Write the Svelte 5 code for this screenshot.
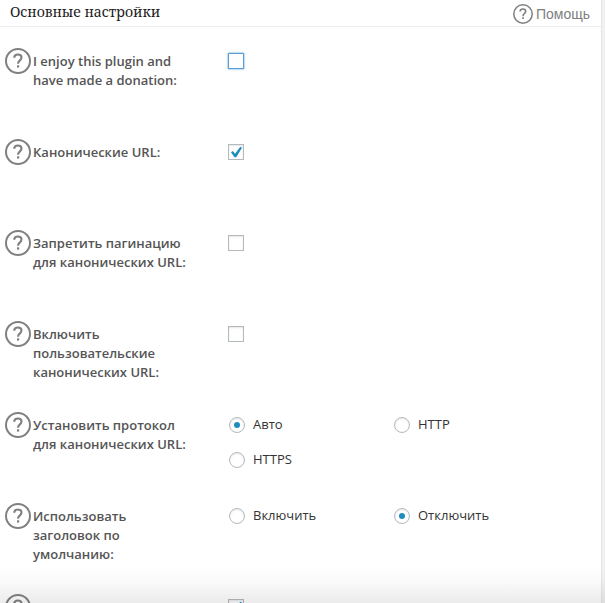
<script>
  const options = [
    { id: 'donate', label: 'I enjoy this plugin and have made a donation:', type: 'checkbox', checked: false, active: true },
    { id: 'canonical', label: 'Канонические URL:', type: 'checkbox', checked: true },
    { id: 'no-paged', label: 'Запретить пагинацию для канонических URL:', type: 'checkbox', checked: false },
    { id: 'custom-canonical', label: 'Включить пользовательские канонических URL:', type: 'checkbox', checked: false },
    { id: 'protocol', label: 'Установить протокол для канонических URL:', type: 'radio', choices: ['Авто', 'HTTP', 'HTTPS'], value: 'Авто' },
    { id: 'original-title', label: 'Использовать заголовок по умолчанию:', type: 'radio', choices: ['Включить', 'Отключить'], value: 'Отключить' },
    { id: 'more', label: '', type: 'checkbox', checked: true }
  ];

  let values = $state(Object.fromEntries(options.map((o) => [o.id, o.type === 'radio' ? o.value : o.checked])));
</script>

{#snippet helpIcon()}
  <svg viewBox="0 0 26 26" fill="none" stroke="currentColor" aria-hidden="true">
    <circle cx="13" cy="13" r="12" stroke-width="2" />
    <path d="M9.2 9.8C9.3 7.6 10.8 6.5 12.9 6.5c2.2 0 3.6 1.2 3.6 3 0 1.5-.9 2.3-1.8 3.1-1.1.9-1.6 1.6-1.6 3.2" stroke-width="2.1" />
    <path d="M12 17.3h2.2v2.3H12z" fill="currentColor" stroke="none" />
  </svg>
{/snippet}

<main class="settings">
  <section class="postbox">
    <header>
      <h3>Основные настройки</h3>
      <a class="help" href="#help">
        {@render helpIcon()}
        <span>Помощь</span>
      </a>
    </header>

    <form class="options">
      {#each options as option (option.id)}
        <div class="option">
          <button type="button" class="hint" aria-label="Помощь">{@render helpIcon()}</button>

          {#if option.type === 'checkbox'}
            <label class="title" for={option.id}>{option.label}</label>
            <div class="field">
              <input
                type="checkbox"
                id={option.id}
                class:active={option.active}
                bind:checked={values[option.id]}
              >
            </div>
          {:else}
            <span class="title" id="{option.id}-title">{option.label}</span>
            <div class="field choices" role="radiogroup" aria-labelledby="{option.id}-title">
              {#each option.choices as choice}
                <label class="choice">
                  <input type="radio" name={option.id} value={choice} bind:group={values[option.id]}>
                  <span>{choice}</span>
                </label>
              {/each}
            </div>
          {/if}
        </div>
      {/each}
    </form>
  </section>
  <div class="shade"></div>
</main>

<style>
  :global(body) {
    margin: 0;
    background: #f1f1f1;
  }

  .settings {
    position: relative;
    height: 100vh;
    overflow: hidden;
    font: 13px/19px "Open Sans", "Noto Sans", sans-serif;
    color: #333;
  }

  .postbox {
    margin-right: 3px;
    background: #fff;
    border-right: 1px solid #e5e5e5;
  }

  header {
    display: flex;
    align-items: center;
    justify-content: space-between;
    height: 26px;
    padding: 0 11px 0 10px;
    border-bottom: 1px solid #eee;
  }

  h3 {
    margin: 0;
    padding-bottom: 2px;
    font: 14px/20px "Noto Serif", "Droid Serif", serif;
    color: #222;
  }

  .help {
    display: flex;
    align-items: center;
    gap: 3px;
    padding-top: 2px;
    font: 14px/20px "Liberation Sans", Arial, sans-serif;
    color: #808080;
    text-decoration: none;
  }

  .help svg {
    width: 20px;
    height: 20px;
  }

  .options {
    padding: 21px 0 0 5px;
  }

  .option {
    display: grid;
    grid-template-columns: 26px 160px 1fr;
    align-items: start;
    column-gap: 2px;
    height: 91px;
  }

  .hint {
    padding: 0;
    border: 0;
    background: none;
    color: #808080;
    cursor: pointer;
  }

  .hint svg {
    display: block;
    width: 26px;
    height: 26px;
  }

  .title {
    padding-top: 4px;
    font-weight: 600;
    color: #555;
  }

  .field {
    padding: 5px 0 0 33px;
  }

  .choices {
    display: grid;
    grid-template-columns: 165px 165px;
    row-gap: 19px;
    padding-left: 34px;
  }

  .choice {
    display: flex;
    align-items: center;
    gap: 8px;
    height: 16px;
  }

  .choice span {
    padding-bottom: 2px;
  }

  input {
    appearance: none;
    display: grid;
    place-content: center;
    flex: none;
    width: 16px;
    height: 16px;
    margin: 0;
    border: 1px solid #b4b9be;
    background: #fff;
    box-shadow: inset 0 1px 2px rgba(0, 0, 0, 0.1);
  }

  input[type='radio'] {
    border-radius: 50%;
  }

  input[type='radio']:checked::before {
    content: '';
    width: 6px;
    height: 6px;
    border-radius: 50%;
    background: #1e8cbe;
  }

  input[type='checkbox']:checked::before {
    content: '';
    width: 12px;
    height: 12px;
    background: #1e8cbe;
    clip-path: polygon(8% 52%, 24% 42%, 42% 64%, 86% 6%, 100% 14%, 52% 94%, 38% 94%);
  }

  input.active {
    border-color: #5b9dd9;
    box-shadow: 0 0 2px rgba(30, 140, 190, 0.8);
  }

  /* Fade at the bottom edge of the scrolled area */
  .shade {
    position: absolute;
    inset: auto 0 0;
    height: 36px;
    background: linear-gradient(rgba(0, 0, 0, 0), rgba(0, 0, 0, 0.02) 40%, rgba(0, 0, 0, 0.08));
    pointer-events: none;
  }
</style>
